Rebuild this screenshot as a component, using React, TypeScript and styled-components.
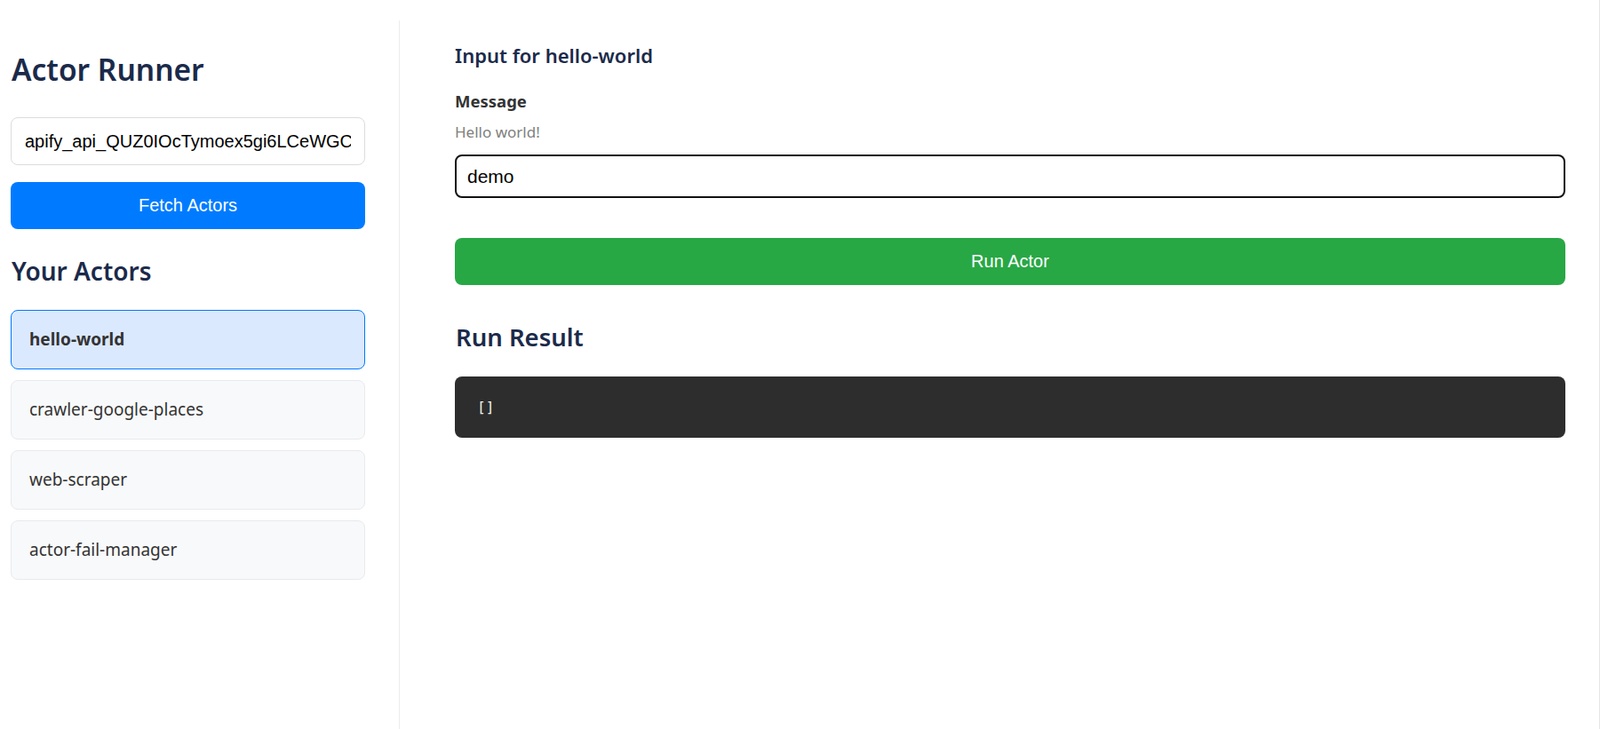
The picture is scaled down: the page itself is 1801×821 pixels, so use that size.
import React, { useState } from "react";
import styled, { createGlobalStyle } from "styled-components";

const Global = createGlobalStyle`
  html, body { margin: 0; padding: 0; background: #ffffff; }
  body { font-family: "Noto Sans", "Open Sans", sans-serif; }
  * { box-sizing: border-box; }
`;

const Page = styled.div`
  display: flex;
  align-items: stretch;
  min-height: 100vh;
  padding-top: 23px;
  border-right: 1px solid #e6e6e6;
`;

const Sidebar = styled.aside`
  width: 450px;
  flex: 0 0 450px;
  padding: 0 38px 0 12px;
  border-right: 1px solid #ececec;
  min-height: calc(100vh - 23px);
`;

const Title = styled.h1`
  margin: 33px 0 0 1px;
  font-size: 33.5px;
  line-height: 45px;
  font-weight: 600;
  color: #1b2a4a;
`;

const KeyInput = styled.input`
  display: block;
  width: 100%;
  height: 54px;
  margin-top: 31px;
  padding: 0 15px;
  border: 1px solid #dcdcdc;
  border-radius: 8px;
  font-family: "Liberation Sans", Arial, sans-serif;
  font-size: 20px;
  color: #000;
  background: #fff;
  outline: none;
`;

const Button = styled.button<{ $tone: "blue" | "green"; $gap: number }>`
  display: block;
  width: 100%;
  height: 53px;
  margin-top: ${(p) => p.$gap}px;
  border: none;
  border-radius: 8px;
  background: ${(p) => (p.$tone === "blue" ? "#007bff" : "#28a745")};
  color: #fff;
  font-family: "Liberation Sans", Arial, sans-serif;
  font-size: 20px;
  cursor: pointer;
`;

const SectionTitle = styled.h2<{ $gap: number; $size: number }>`
  margin: ${(p) => p.$gap}px 0 0 1px;
  font-size: ${(p) => p.$size}px;
  line-height: 36px;
  font-weight: 600;
  color: #1b2a4a;
`;

const ActorList = styled.ul`
  list-style: none;
  margin: 26px 0 0;
  padding: 0;
  display: flex;
  flex-direction: column;
  gap: 12.5px;
`;

const ActorItem = styled.li<{ $active: boolean }>`
  height: 66.5px;
  display: flex;
  align-items: center;
  padding: 0 20px;
  border-radius: 8px;
  border: 1px solid ${(p) => (p.$active ? "#007bff" : "#e8eaed")};
  background: ${(p) => (p.$active ? "#dbe9fe" : "#f8f9fa")};
  color: #333;
  font-size: 19px;
  font-weight: ${(p) => (p.$active ? 700 : 400)};
  cursor: pointer;
`;

const Main = styled.main`
  flex: 1;
  padding: 0 38px 0 62px;
`;

const InputTitle = styled.h3`
  margin: 25px 0 0;
  font-size: 22px;
  line-height: 29px;
  font-weight: 600;
  color: #1b2a4a;
`;

const FieldLabel = styled.div`
  margin-top: 25px;
  font-size: 18.5px;
  line-height: 24px;
  font-weight: 700;
  color: #333;
`;

const FieldHint = styled.div`
  margin-top: 12px;
  font-size: 17px;
  line-height: 22px;
  color: #808080;
`;

const FieldInput = styled.input`
  display: block;
  width: 100%;
  height: 49px;
  margin-top: 14px;
  padding: 0 12px;
  border: 2px solid #111;
  border-radius: 8px;
  font-family: "Liberation Sans", Arial, sans-serif;
  font-size: 21px;
  color: #000;
  background: #fff;
  outline: none;
`;

const Result = styled.pre`
  margin: 26px 0 0;
  height: 69px;
  padding: 0 25px;
  display: flex;
  align-items: center;
  background: #2d2d2d;
  border-radius: 8px;
  color: #f1f1e6;
  font-family: "DejaVu Sans Mono", "Liberation Mono", monospace;
  font-size: 16px;
`;

const actors = ["hello-world", "crawler-google-places", "web-scraper", "actor-fail-manager"];

export default function App() {
  const [selected, setSelected] = useState("hello-world");
  const [apiKey, setApiKey] = useState("apify_api_QUZ0IOcTymoex5gi6LCeWGC");
  const [message, setMessage] = useState("demo");
  return (
    <>
      <Global />
      <Page>
        <Sidebar>
          <Title>Actor Runner</Title>
          <KeyInput value={apiKey} onChange={(e) => setApiKey(e.target.value)} />
          <Button $tone="blue" $gap={19}>Fetch Actors</Button>
          <SectionTitle $gap={29} $size={28}>Your Actors</SectionTitle>
          <ActorList>
            {actors.map((a) => (
              <ActorItem key={a} $active={a === selected} onClick={() => setSelected(a)}>
                {a}
              </ActorItem>
            ))}
          </ActorList>
        </Sidebar>
        <Main>
          <InputTitle>Input for {selected}</InputTitle>
          <FieldLabel>Message</FieldLabel>
          <FieldHint>Hello world!</FieldHint>
          <FieldInput value={message} onChange={(e) => setMessage(e.target.value)} />
          <Button $tone="green" $gap={45}>Run Actor</Button>
          <SectionTitle $gap={41} $size={27.5}>Run Result</SectionTitle>
          <Result>[]</Result>
        </Main>
      </Page>
    </>
  );
}
